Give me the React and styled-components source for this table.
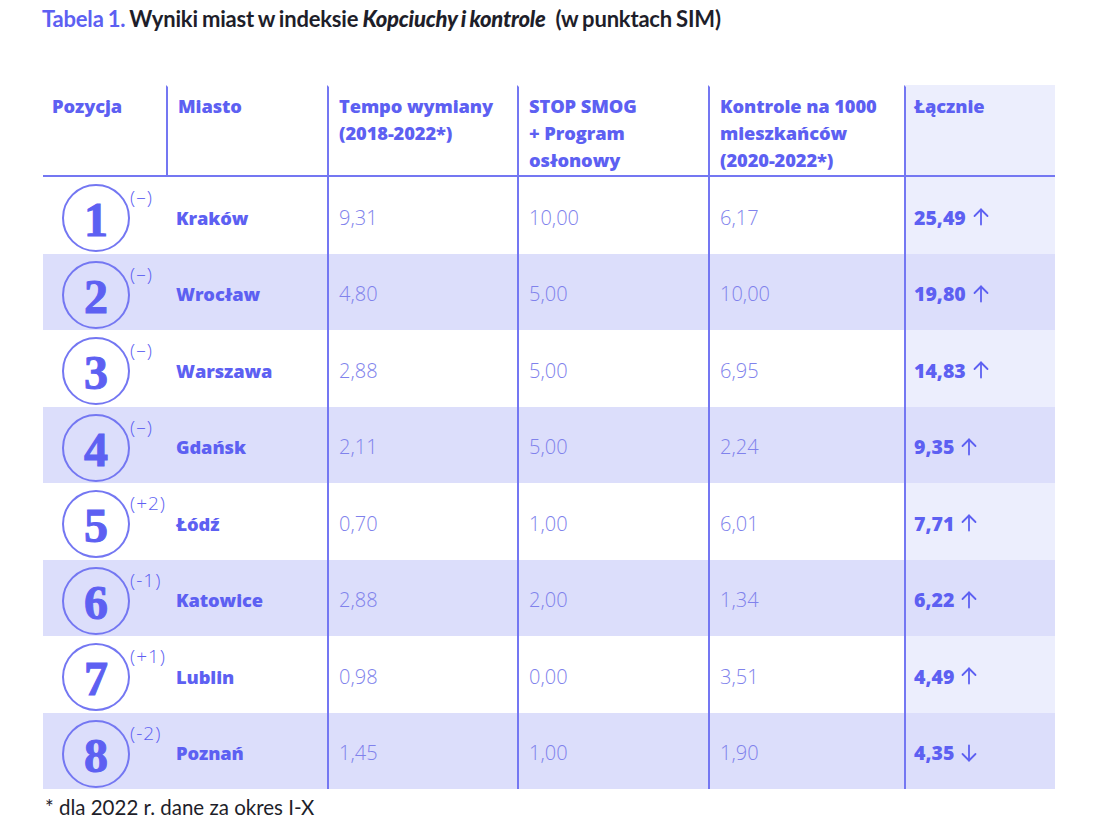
import React from "react";
import styled, { createGlobalStyle } from "styled-components";

const Global = createGlobalStyle`
  html, body { margin: 0; padding: 0; background: #ffffff; }
  body { font-family: "Open Sans", "Liberation Sans", sans-serif; }
`;

const BLUE = "#5d60f2";
const LINE = "#7477f2";
const SHADE = "#dcdefb";
const TINT = "#eceefd";

const Page = styled.div`
  width: 1100px;
  padding: 6px 0 0 43px;
  box-sizing: border-box;
`;

const Title = styled.h1`
  margin: 0 0 53px -1px;
  font-family: Lato, "Liberation Sans", sans-serif;
  font-weight: 700;
  font-size: 22px;
  line-height: 26px;
  color: #1e1e2a;
  letter-spacing: -0.2px;
  word-spacing: -1px;
`;

const TitleLabel = styled.span`
  color: ${BLUE};
`;

const TitleItalic = styled.em`
  font-style: italic;
  font-weight: 900;
`;

const TitleUnit = styled.span`
  font-weight: 700;
  margin-left: 10px;
`;

const Table = styled.div`
  display: grid;
  grid-template-columns: 123px 161px 190px 191px 196px 151px;
  width: 1012px;
`;

const HeadCell = styled.div`
  height: 92px;
  box-sizing: border-box;
  padding: 5px 6px 0 ${(p) => p.$pl || 10}px;
  border-bottom: 2px solid ${LINE};
  font-weight: 800;
  font-size: 18.3px;
  line-height: 27px;
  color: ${BLUE};
  letter-spacing: -0.1px;
  background: ${(p) => (p.$total ? TINT : "transparent")};
  border-left: ${(p) => (p.$line ? `2px solid ${LINE}` : "none")};
  border-top: 2px solid ${(p) => (p.$total ? TINT : "transparent")};
`;

const Cell = styled.div`
  height: 76.5px;
  box-sizing: border-box;
  display: flex;
  align-items: center;
  padding: 4px 6px 0 ${(p) => p.$pl || 10}px;
  background: ${(p) => (p.$shade ? SHADE : p.$total ? TINT : "#ffffff")};
  border-left: ${(p) => (p.$line ? `2px solid ${LINE}` : "none")};
`;

const PosCell = styled(Cell)`
  padding: 0 0 0 19px;
  align-items: flex-start;
`;

const Circle = styled.div`
  width: 68px;
  height: 68px;
  margin-top: 7px;
  box-sizing: border-box;
  border: 2px solid ${LINE};
  border-radius: 50%;
  display: flex;
  align-items: center;
  justify-content: center;
  font-family: "Liberation Serif", "DejaVu Serif", serif;
  font-weight: 700;
  font-size: 48px;
  line-height: 1;
  color: ${BLUE};
  -webkit-text-stroke: 1px ${BLUE};
  padding-top: 4px;
`;

const Change = styled.span`
  margin-top: 10px;
  font-family: "Open Sans", sans-serif;
  font-weight: 300;
  font-size: 19px;
  letter-spacing: 1px;
  line-height: 20px;
  color: ${BLUE};
`;

const City = styled(Cell)`
  font-weight: 800;
  font-size: 18.3px;
  color: ${BLUE};
  letter-spacing: -0.1px;
`;

const Value = styled(Cell)`
  font-weight: 300;
  font-size: 20px;
  color: #8082ec;
`;

const Total = styled(Cell)`
  font-weight: 800;
  font-size: 19.5px;
  color: ${BLUE};
  gap: 7px;
`;

const Footnote = styled.p`
  margin: 6px 0 0 2px;
  font-family: Lato, "Liberation Sans", sans-serif;
  font-size: 20.5px;
  line-height: 24px;
  color: #1e1e2a;
`;

const Arrow = ({ down }) => (
  <svg width="16" height="18" viewBox="0 0 16 18" fill="none" stroke={BLUE} strokeWidth="1.8" strokeLinecap="round" strokeLinejoin="round">
    {down ? (
      <>
        <path d="M8 1.5 V16.5" />
        <path d="M1.5 10 L8 16.5 L14.5 10" />
      </>
    ) : (
      <>
        <path d="M8 16.5 V1.5" />
        <path d="M1.5 8 L8 1.5 L14.5 8" />
      </>
    )}
  </svg>
);

const rows = [
  { n: 1, ch: "(–)", city: "Kraków", a: "9,31", b: "10,00", c: "6,17", t: "25,49" },
  { n: 2, ch: "(–)", city: "Wrocław", a: "4,80", b: "5,00", c: "10,00", t: "19,80" },
  { n: 3, ch: "(–)", city: "Warszawa", a: "2,88", b: "5,00", c: "6,95", t: "14,83" },
  { n: 4, ch: "(–)", city: "Gdańsk", a: "2,11", b: "5,00", c: "2,24", t: "9,35" },
  { n: 5, ch: "(+2)", city: "Łódź", a: "0,70", b: "1,00", c: "6,01", t: "7,71" },
  { n: 6, ch: "(-1)", city: "Katowice", a: "2,88", b: "2,00", c: "1,34", t: "6,22" },
  { n: 7, ch: "(+1)", city: "Lublin", a: "0,98", b: "0,00", c: "3,51", t: "4,49" },
  { n: 8, ch: "(-2)", city: "Poznań", a: "1,45", b: "1,00", c: "1,90", t: "4,35", down: true },
];

export default function App() {
  return (
    <Page>
      <Global />
      <Title>
        <TitleLabel>Tabela 1.</TitleLabel> Wyniki miast w indeksie{" "}
        <TitleItalic>Kopciuchy i kontrole</TitleItalic>
        <TitleUnit>(w punktach SIM)</TitleUnit>
      </Title>
      <Table>
        <HeadCell $pl={9}>Pozycja</HeadCell>
        <HeadCell $line>Miasto</HeadCell>
        <HeadCell $line>
          Tempo wymiany
          <br />
          (2018-2022*)
        </HeadCell>
        <HeadCell $line>
          STOP SMOG
          <br />+ Program
          <br />
          osłonowy
        </HeadCell>
        <HeadCell $line>
          Kontrole na 1000
          <br />
          mieszkańców
          <br />
          (2020-2022*)
        </HeadCell>
        <HeadCell $line $total $pl={8}>
          Łącznie
        </HeadCell>
        {rows.map((r) => {
          const shade = r.n % 2 === 0;
          return (
            <React.Fragment key={r.n}>
              <PosCell $shade={shade}>
                <Circle>{r.n}</Circle>
                <Change>{r.ch}</Change>
              </PosCell>
              <City $shade={shade}>{r.city}</City>
              <Value $shade={shade} $line>
                {r.a}
              </Value>
              <Value $shade={shade} $line>
                {r.b}
              </Value>
              <Value $shade={shade} $line>
                {r.c}
              </Value>
              <Total $shade={shade} $total $line $pl={8}>
                {r.t}
                <Arrow down={r.down} />
              </Total>
            </React.Fragment>
          );
        })}
      </Table>
      <Footnote>* dla 2022 r. dane za okres I-X</Footnote>
    </Page>
  );
}
